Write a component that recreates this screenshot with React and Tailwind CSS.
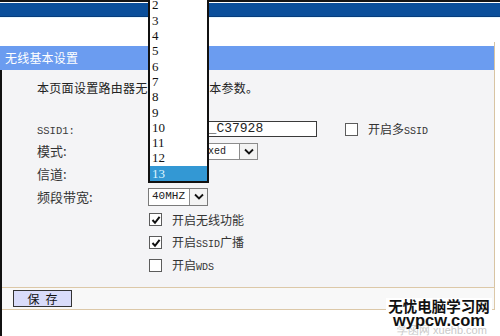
import React from "react";

const cjk = "font-['Noto_Sans_CJK_SC','Noto_Sans',sans-serif]";
const mono = "font-['Liberation_Mono','DejaVu_Sans_Mono',monospace]";

const channels = ["1", "2", "3", "4", "5", "6", "7", "8", "9", "10", "11", "12", "13"];

const CheckBox = ({ checked }) => (
  <span className="w-[13px] h-[13px] border border-[#5c5c5c] bg-white flex items-center justify-center shrink-0">
    {checked && (
      <svg width="10" height="10" viewBox="0 0 10 10">
        <path d="M1.5 5 L4 7.8 L8.6 1.8" stroke="#111" strokeWidth="2" fill="none" />
      </svg>
    )}
  </span>
);

const Arrow = () => (
  <span className="w-[18px] h-full border-l border-[#8c8c8c] bg-[#f3f3f3] flex items-center justify-center shrink-0">
    <svg width="10" height="7" viewBox="0 0 10 7">
      <path d="M1 1.5 L5 5.5 L9 1.5" stroke="#111" strokeWidth="1.8" fill="none" />
    </svg>
  </span>
);

const Label = ({ children }) => (
  <div className="w-[111px] shrink-0 text-[13px] text-[#333]">{children}</div>
);

export default function App() {
  return (
    <div className={`w-[500px] h-[336px] bg-white relative overflow-hidden ${cjk}`}>
      {/* top band */}
      <div className="h-[2px] bg-[#151515]" />
      <div className="h-[1px] bg-white" />
      <div className="h-[14px] bg-[#0b4f9b] border-b border-[#073d7c]" />
      <div className="h-[1px] bg-[#e6f6ff]" />
      <div className="h-[24px]" />

      <div className="w-[495px]">
        <div className="h-[4px] border-r border-[#d8c4a2]" />
        <div className="h-[24px] bg-[#6b9cf0] border-r border-[#d8c4a2] flex items-center pl-[5px] text-white text-[12px] tracking-[0.2px]">
          无线基本设置
        </div>

        <div className="border-l-2 border-[#111]">
          <div className="border-r border-[#d8c4a2] bg-[#f4f4f6] pl-[35px] pt-[10px] pb-[10px]">
            <p className="text-[12px] tracking-[0.3px] leading-[16px] text-[#222]">
              本页面设置路由器无线网络的基本参数。
            </p>

            <div className="mt-[22px] flex flex-col">
              <div className="h-[22px] flex items-center">
                <Label>
                  <span className={`${mono} text-[10.5px] text-[#3b3b3b]`}>SSID1:</span>
                </Label>
                <div className={`w-[169px] h-[16px] border border-[#3a3a3a] bg-white pl-[5px] flex items-center ${mono} text-[13px] text-[#222]`}>
                  TP-LINK_C37928
                </div>
                <div className="ml-[28px] flex items-center gap-[10px]">
                  <CheckBox />
                  <span className="text-[12px] text-[#333]">
                    开启多<span className={`${mono} text-[10px]`}>SSID</span>
                  </span>
                </div>
              </div>

              <div className="h-[22px] flex items-center">
                <Label>模式:</Label>
                <div className="w-[110px] h-[17px] border border-[#8c8c8c] bg-white flex items-center">
                  <span className={`flex-1 pl-[11px] ${mono} text-[10px] text-[#222]`}>11bgn mixed</span>
                  <Arrow />
                </div>
              </div>

              <div className="h-[23px] flex items-center">
                <Label>信道:</Label>
                <div className="w-[58px] h-[17px] border border-[#8c8c8c] bg-white flex items-center">
                  <span className={`flex-1 pl-[3px] ${mono} text-[11px]`}>13</span>
                  <Arrow />
                </div>
              </div>

              <div className="h-[23px] flex items-center">
                <Label>频段带宽:</Label>
                <div className="w-[60px] h-[18px] border border-[#7a7a7a] bg-white flex items-center">
                  <span className={`flex-1 pl-[3px] ${mono} text-[11px] text-[#222]`}>40MHZ</span>
                  <Arrow />
                </div>
              </div>

              {[
                { on: true, text: <>开启无线功能</> },
                { on: true, text: <>开启<span className={`${mono} text-[10px]`}>SSID</span>广播</> },
                { on: false, text: <>开启<span className={`${mono} text-[10px]`}>WDS</span></> },
              ].map((row, i) => (
                <div key={i} className="h-[23px] flex items-center">
                  <div className="w-[112px] shrink-0" />
                  <CheckBox checked={row.on} />
                  <span className="ml-[10px] text-[12px] text-[#333]">{row.text}</span>
                </div>
              ))}
            </div>
          </div>

          <div className="h-[23px] border-y border-r border-[#dcc8a8] bg-[#f8f8f8] flex items-center pl-[11px]">
            <button className="w-[59px] h-[17px] border border-[#333] bg-[#d9dcfa] text-[12px] text-[#111] leading-none tracking-[6px] pl-[6px]">
              保存
            </button>
          </div>
          <div className="h-[26px]" />
        </div>
      </div>

      {/* open channel list */}
      <ul className="absolute left-[148px] bottom-[153px] w-[61px] border-2 border-[#111] bg-white font-['Liberation_Serif',serif] text-[13px] text-[#111]">
        {channels.map((c) => (
          <li
            key={c}
            className={`h-[15.3px] leading-[15.3px] pl-[2px] ${c === "13" ? "bg-[#3398d4] text-[#dff5ff]" : ""}`}
          >
            {c}
          </li>
        ))}
      </ul>

      {/* watermark */}
      <div className="absolute left-[386px] top-[298px] w-[106px] h-[38px] bg-white flex flex-col items-center">
        <span className="text-[14.5px] font-bold leading-[15px] text-[#111]">无忧电脑学习网</span>
        <div className="relative w-full flex justify-center">
          <span className="absolute top-[9px] left-[11px] text-[11px] text-[#c9c9c9] font-['Liberation_Sans',sans-serif] whitespace-nowrap">
            学函网 xuehb.com
          </span>
          <span className="relative font-['Liberation_Sans',sans-serif] font-bold text-[16.5px] leading-[14px] text-[#111]">
            wypcw.com
          </span>
        </div>
      </div>
    </div>
  );
}
